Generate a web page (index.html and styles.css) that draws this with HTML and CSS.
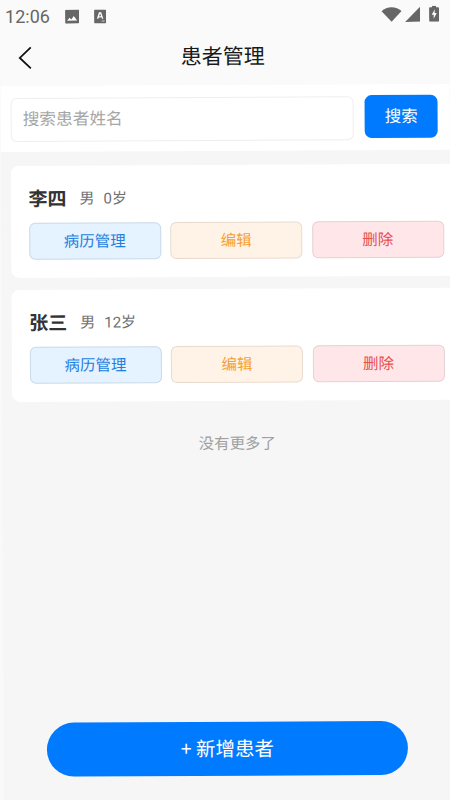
FILE: index.html
```html
<!DOCTYPE html>
<html lang="zh-CN">
<head>
<meta charset="utf-8">
<title>患者管理</title>
<link rel="stylesheet" href="styles.css">
</head>
<body>
<div class="page">
  <header class="top">
    <div class="status">
      <span class="time">12:06</span>
      <svg class="ic-photo" viewBox="0 0 14 14"><path fill="#666" d="M1 0h12a1 1 0 0 1 1 1v12a1 1 0 0 1-1 1H1a1 1 0 0 1-1-1V1a1 1 0 0 1 1-1z"/><path fill="#fff" d="M2 11l2.500-3 1.700 1.800L8.700 6.500 12 11z"/></svg>
      <svg class="ic-a" viewBox="0 0 12 14"><rect width="12" height="14" rx="1" fill="#666"/><path fill="#fff" d="M4.900 2.800h2.200l2.100 6.400H7.800l-.4-1.300H4.600l-.4 1.300H2.800zM5 6.800h2L6 3.900z"/><rect x="7.500" y="11" width="3" height="1" fill="#ccc"/></svg>
      <span class="spacer"></span>
      <svg class="ic-wifi" viewBox="0 0 20 15"><path fill="#666" d="M0 4.200C2.700 1.700 6.200.3 10 .3s7.300 1.400 10 3.900L10 14.700z"/></svg>
      <svg class="ic-signal" viewBox="0 0 15 15"><path fill="#666" d="M15 0v15H0z"/></svg>
      <svg class="ic-batt" viewBox="0 0 10 16"><path fill="#666" d="M3 0h4v1.500h2a1 1 0 0 1 1 1V15a1 1 0 0 1-1 1H1a1 1 0 0 1-1-1V2.500a1 1 0 0 1 1-1h2z"/><path fill="#fff" d="M5.800 3.500L2.600 9h2v4l3-5.700H5.500z"/></svg>
    </div>
    <div class="nav">
      <svg class="back" viewBox="0 0 16 24"><path fill="none" stroke="#111" stroke-width="1.800" d="M13.500 1.500L2.500 12l11 10.500"/></svg>
      <h1 class="title">患者管理</h1>
    </div>
  </header>

  <section class="search">
    <div class="input">搜索患者姓名</div>
    <div class="search-btn">搜索</div>
  </section>

  <main class="list">
    <article class="card">
      <div class="info"><span class="name">李四</span><span class="meta">男</span><span class="meta">0岁</span></div>
      <div class="actions">
        <div class="btn blue">病历管理</div>
        <div class="btn orange">编辑</div>
        <div class="btn red">删除</div>
      </div>
    </article>
    <article class="card">
      <div class="info"><span class="name">张三</span><span class="meta">男</span><span class="meta">12岁</span></div>
      <div class="actions">
        <div class="btn blue">病历管理</div>
        <div class="btn orange">编辑</div>
        <div class="btn red">删除</div>
      </div>
    </article>
    <p class="end">没有更多了</p>
  </main>

  <div class="add">+ 新增患者</div>
</div>
</body>
</html>
```
FILE: styles.css
```css
* { box-sizing: border-box; }
html, body {
  margin: 0;
  width: 450px;
  height: 800px;
  overflow: hidden;
  background: #f9f9f9;
}
body {
  font-family: "Noto Sans CJK SC", "Noto Sans", sans-serif;
}
.page {
  position: relative;
  width: 449px;
  height: 810px;
  background: #f6f6f6;
  transform: rotate(-0.3deg);
  transform-origin: 0 0;
}
.top {
  height: 86px;
  background: #fafafa;
}
.status {
  height: 31px;
  display: flex;
  align-items: center;
  padding: 2px 10px 0 5px;
  color: #666;
}
.time {
  font-family: Roboto, sans-serif;
  font-size: 18px;
  width: 60px;
}
.ic-photo { width: 14px; height: 14px; margin-right: 15px; }
.ic-a { width: 12px; height: 14px; }
.spacer { flex: 1; }
.ic-wifi { width: 21px; height: 15px; margin-right: 3px; margin-top: -1px; }
.ic-signal { width: 15px; height: 15px; margin-right: 9px; margin-top: -1px; }
.ic-batt { width: 10px; height: 16px; margin-top: -2px; }
.nav {
  position: relative;
  height: 54px;
  display: flex;
  align-items: flex-start;
  justify-content: center;
  padding-right: 4px;
}
.back {
  position: absolute;
  left: 17px;
  top: 15px;
  width: 16px;
  height: 24px;
}
.title {
  margin: 0;
  font-size: 21px;
  font-weight: 400;
  color: #1a1a1a;
  line-height: 1;
  padding-top: 15px;
}
.search {
  height: 66px;
  background: #fff;
  display: flex;
  align-items: flex-start;
  padding: 11px 12px 0 10px;
  gap: 11px;
}
.input {
  width: 344px;
  height: 44px;
  margin-top: 1px;
  border: 1px solid #eeeeee;
  border-radius: 6px;
  background: #fff;
  font-size: 16.700px;
  line-height: 38px;
  padding-left: 11px;
  color: #a6a6a6;
}
.search-btn {
  width: 73px;
  height: 43px;
  border-radius: 7px;
  background: #007aff;
  color: #fff;
  font-size: 16.500px;
  line-height: 41px;
  text-align: center;
}
.list {
  padding: 14px 0 0 9.500px;
  display: flex;
  flex-direction: column;
  gap: 12px;
}
.card {
  width: 452px;
  height: 112px;
  background: #fff;
  border-radius: 8px;
  padding: 17px 18px 0;
}
.info {
  display: flex;
  align-items: center;
  height: 29px;
  color: #707070;
}
.name {
  font-size: 19px;
  font-weight: 700;
  color: #333;
  margin-right: 13px;
}
.meta {
  font-size: 15px;
  margin-right: 9px;
  font-family: Roboto, "Noto Sans CJK SC", sans-serif;
}
.actions {
  display: flex;
  gap: 9.500px;
  margin-top: 11px;
}
.btn {
  width: 132px;
  height: 37px;
  border-radius: 6px;
  border: 1px solid;
  font-size: 15.500px;
  line-height: 32px;
  text-align: center;
}
.blue { background: #e5f2ff; border-color: #c9d9e8; color: #1f7fe0; }
.orange { background: #fff3e8; border-color: #e8dacd; color: #f5a033; }
.red { background: #ffe7e9; border-color: #e6d0d2; color: #e65050; }
.end {
  margin: 17px 0 0;
  width: 451px;
  text-align: center;
  font-size: 15.400px;
  line-height: 24px;
  color: #a0a0a0;
}
.add {
  position: absolute;
  left: 43px;
  top: 722.500px;
  width: 361px;
  height: 54px;
  border-radius: 27px;
  background: #007aff;
  color: #fff;
  font-size: 19.500px;
  line-height: 51px;
  text-align: center;
}
```
